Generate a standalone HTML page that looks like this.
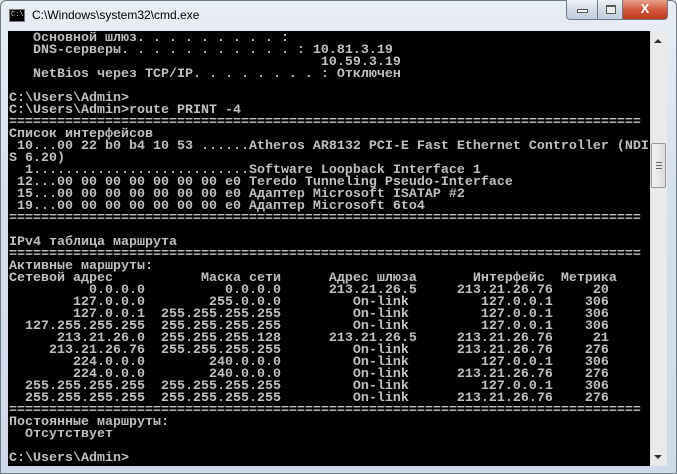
<!DOCTYPE html>
<html><head><meta charset="utf-8"><style>
*{margin:0;padding:0;box-sizing:border-box}
body{width:677px;height:474px;overflow:hidden;background:#dbe4ef;position:relative;font-family:"Liberation Sans",sans-serif}
.frame{position:absolute;left:0;top:0;width:677px;height:474px;background:linear-gradient(180deg,#e9eef5 0%,#d6e0ec 40%,#cfdae8 100%);border:1px solid #6f7a87;border-radius:6px 6px 0 0}
.title{position:absolute;left:32px;top:8px;font-size:12px;color:#000}
.icon{position:absolute;left:9px;top:9px;width:16px;height:13px;background:#000;border:1px solid #777;color:#ccc;font:7px "Liberation Mono",monospace;line-height:11px;padding-left:1px}
.btn{position:absolute;top:0;height:20px;border:1px solid #6d7a8a;border-top:none;background:linear-gradient(#eef2f7,#d2dbe6 50%,#c3cedb)}
.con{position:absolute;left:8px;top:31px;width:642px;height:435px;background:#000;overflow:hidden}
pre{font-family:"Liberation Mono",monospace;font-size:13.33px;line-height:12px;color:#c0c0c0;margin-left:1px;margin-top:2px;font-weight:bold;letter-spacing:0}
.sb{position:absolute;left:650px;top:31px;width:17px;height:435px;background:#eaeaea;border-left:1px solid #ddd}
.thumb{position:absolute;left:651px;top:143px;width:15px;height:45px;background:linear-gradient(90deg,#f3f3f3,#dcdcdc);border:1px solid #999;border-radius:2px}
</style></head><body>
<div class="frame"></div>
<div class="icon">C:\</div>
<div class="title">C:\Windows\system32\cmd.exe</div>
<div class="btn" style="left:566px;width:32px;border-radius:0 0 0 4px"><div style="position:absolute;left:10px;top:9px;width:11px;height:4px;border:1px solid #555;background:#fff"></div></div>
<div class="btn" style="left:597px;width:26px"><div style="position:absolute;left:8px;top:5px;width:10px;height:9px;border:1px solid #555;border-top-width:2px;background:#eee"></div></div>
<div class="btn" style="left:622px;width:46px;border-radius:0 0 4px 0;background:linear-gradient(#e8a08c,#d45a3e 50%,#c1381d);color:#fff;font:bold 13px 'Liberation Sans',sans-serif;text-align:center;line-height:18px">X</div>
<div class="con"><pre>   Основной шлюз. . . . . . . . . :
   DNS-серверы. . . . . . . . . . . : 10.81.3.19
                                       10.59.3.19
   NetBios через TCP/IP. . . . . . . . : Отключен

C:\Users\Admin>
C:\Users\Admin>route PRINT -4
===============================================================================
Список интерфейсов
 10...00 22 b0 b4 10 53 ......Atheros AR8132 PCI-E Fast Ethernet Controller (NDI
S 6.20)
  1...........................Software Loopback Interface 1
 12...00 00 00 00 00 00 00 e0 Teredo Tunneling Pseudo-Interface
 15...00 00 00 00 00 00 00 e0 Адаптер Microsoft ISATAP #2
 19...00 00 00 00 00 00 00 e0 Адаптер Microsoft 6to4
===============================================================================

IPv4 таблица маршрута
===============================================================================
Активные маршруты:
Сетевой адрес           Маска сети      Адрес шлюза       Интерфейс  Метрика
          0.0.0.0          0.0.0.0      213.21.26.5     213.21.26.76     20
        127.0.0.0        255.0.0.0         On-link         127.0.0.1    306
        127.0.0.1  255.255.255.255         On-link         127.0.0.1    306
  127.255.255.255  255.255.255.255         On-link         127.0.0.1    306
      213.21.26.0  255.255.255.128      213.21.26.5     213.21.26.76     21
     213.21.26.76  255.255.255.255         On-link      213.21.26.76    276
        224.0.0.0        240.0.0.0         On-link         127.0.0.1    306
        224.0.0.0        240.0.0.0         On-link      213.21.26.76    276
  255.255.255.255  255.255.255.255         On-link         127.0.0.1    306
  255.255.255.255  255.255.255.255         On-link      213.21.26.76    276
===============================================================================
Постоянные маршруты:
  Отсутствует

C:\Users\Admin></pre></div>
<div class="sb"></div>
<div style="position:absolute;left:654px;top:39px;width:0;height:0;border-left:4px solid transparent;border-right:4px solid transparent;border-bottom:4px solid #333"></div>
<div style="position:absolute;left:654px;top:455px;width:0;height:0;border-left:4px solid transparent;border-right:4px solid transparent;border-top:4px solid #333"></div>
<div class="thumb"><div style="position:absolute;left:4px;top:18px;width:6px;height:7px;border-top:1px solid #666;border-bottom:1px solid #666"></div><div style="position:absolute;left:4px;top:21px;width:6px;height:1px;background:#666"></div></div>
</body></html>
